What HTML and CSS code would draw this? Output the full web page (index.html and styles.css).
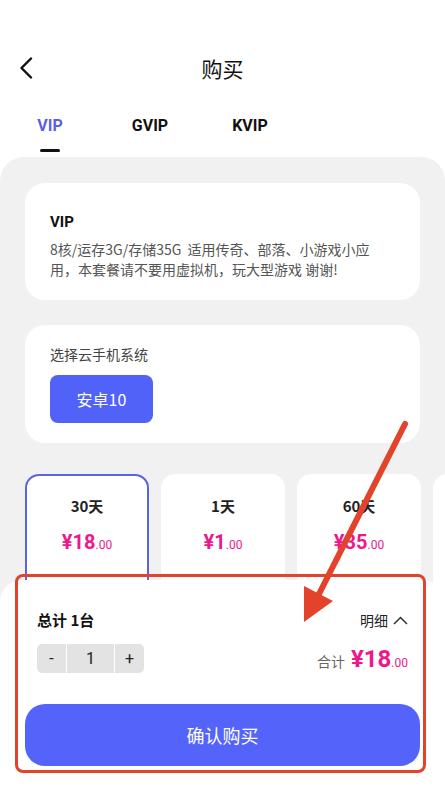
FILE: index.html
```html
<!DOCTYPE html>
<html lang="zh-CN">
<head>
<meta charset="utf-8">
<title>购买</title>
<link rel="stylesheet" href="styles.css">
</head>
<body>
<div class="page">
  <header class="header">
    <span class="back">
      <svg width="14" height="22" viewBox="0 0 14 22"><path d="M12 1.5 L2.5 11 L12 20.5" fill="none" stroke="#111" stroke-width="2.4" stroke-linecap="round" stroke-linejoin="round"/></svg>
    </span>
    <h1 class="title">购买</h1>
    <span></span>
  </header>

  <nav class="tabs">
    <div class="tab active"><span class="tab-text">VIP</span><span class="tab-line"></span></div>
    <div class="tab"><span class="tab-text">GVIP</span></div>
    <div class="tab"><span class="tab-text">KVIP</span></div>
  </nav>

  <main class="panel">
    <section class="card info-card">
      <div class="info-title">VIP</div>
      <p class="info-desc">8核/运存3G/存储35G&nbsp;&nbsp;适用传奇、部落、小游戏小应用，本套餐请不要用虚拟机，玩大型游戏 谢谢!</p>
    </section>

    <section class="card system-card">
      <div class="system-label">选择云手机系统</div>
      <button class="system-btn">安卓10</button>
    </section>

    <div class="plans">
      <div class="plan selected">
        <div class="plan-name">30天</div>
        <div class="plan-price"><span class="yen">¥18</span><span class="cents">.00</span></div>
        <div class="plan-note">新用户首购专享套餐</div>
      </div>
      <div class="plan">
        <div class="plan-name">1天</div>
        <div class="plan-price"><span class="yen">¥1</span><span class="cents">.00</span></div>
        <div class="plan-note">体验版本日用套餐</div>
      </div>
      <div class="plan">
        <div class="plan-name">60天</div>
        <div class="plan-price"><span class="yen">¥35</span><span class="cents">.00</span></div>
        <div class="plan-note">超值优惠套餐</div>
      </div>
      <div class="plan"></div>
    </div>
  </main>

  <footer class="sheet">
    <div class="sheet-row">
      <div class="total-label">总计 1台</div>
      <div class="detail">明细
        <svg width="15" height="9" viewBox="0 0 15 9"><path d="M1 8 L7.5 1.5 L14 8" fill="none" stroke="#333" stroke-width="1.5"/></svg>
      </div>
    </div>
    <div class="sheet-row amount-row">
      <div class="stepper">
        <span class="step minus">-</span>
        <span class="step qty">1</span>
        <span class="step plus">+</span>
      </div>
      <div class="sum"><span class="sum-label">合计</span><span class="sum-yen">¥18</span><span class="sum-cents">.00</span></div>
    </div>
    <button class="confirm">确认购买</button>
  </footer>

  <div class="mark-box"></div>
  <svg class="mark-arrow" width="445" height="791" viewBox="0 0 445 791">
    <line x1="405" y1="424" x2="318" y2="596" stroke="#e3432a" stroke-width="6" stroke-linecap="round"/>
    <polygon points="304,586 333,601 304,622" fill="#e3432a"/>
  </svg>
</div>
</body>
</html>
```

FILE: styles.css
```css
* { box-sizing: border-box; }
html, body { margin: 0; padding: 0; }
body {
  background: #fff;
  font-family: Roboto, "Noto Sans CJK SC", sans-serif;
  color: #111;
  overflow: hidden;
}
.page {
  position: relative;
  width: 445px;
  height: 791px;
  overflow: hidden;
}

.header {
  margin-top: 48px;
  height: 40px;
  display: grid;
  grid-template-columns: 60px 1fr 60px;
  align-items: center;
}
.back {
  display: flex;
  align-items: center;
  padding-left: 19px;
}
.title {
  margin: 0;
  text-align: center;
  font-family: "Noto Sans CJK SC", sans-serif;
  font-size: 21px;
  font-weight: 400;
  line-height: 40px;
  color: #111;
}

.tabs {
  display: grid;
  grid-template-columns: 100px 100px 100px;
  margin-top: 26px;
}
.tab {
  display: flex;
  flex-direction: column;
  align-items: center;
}
.tab-text {
  font-size: 16px;
  font-weight: 700;
  line-height: 24px;
  color: #111;
}
.tab.active .tab-text { color: #5b5fe2; }
.tab-line {
  margin-top: 11px;
  width: 20px;
  height: 3px;
  border-radius: 2px;
  background: #111;
}

.panel {
  margin-top: 5px;
  background: #f1f1f1;
  border-radius: 24px 24px 0 0;
  padding: 26px 25px 0;
  height: 700px;
}
.card {
  background: #fff;
  border-radius: 20px;
}
.info-card {
  padding: 28px 25px 21px;
}
.info-title {
  font-size: 15px;
  font-weight: 700;
  line-height: 22px;
}
.info-desc {
  margin: 6px 0 0;
  width: 340px;
  font-family: "Noto Sans CJK SC", sans-serif;
  font-size: 14px;
  line-height: 20px;
  color: #555;
}
.system-card {
  margin-top: 25px;
  padding: 19px 25px 20px;
}
.system-label {
  font-family: "Noto Sans CJK SC", sans-serif;
  font-size: 14px;
  line-height: 20px;
  color: #444;
}
.system-btn {
  display: block;
  margin-top: 11px;
  width: 103px;
  height: 48px;
  border: 0;
  border-radius: 8px;
  background: #5062f7;
  color: #fff;
  font-family: "Noto Sans CJK SC", sans-serif;
  font-size: 16px;
}

.plans {
  margin-top: 31px;
  margin-right: -25px;
  display: flex;
  gap: 12px;
  overflow: hidden;
}
.plan {
  flex: 0 0 124px;
  height: 140px;
  background: #fff;
  border: 2px solid transparent;
  border-radius: 14px;
  padding-top: 20px;
  text-align: center;
}
.plan.selected { border-color: #5a63e2; }
.plan-name {
  font-family: "Noto Sans CJK SC", sans-serif;
  font-size: 15px;
  font-weight: 700;
  line-height: 20px;
  color: #222;
}
.plan-price {
  margin-top: 12px;
  line-height: 28px;
  color: #ea1a8e;
}
.yen { font-size: 20px; font-weight: 700; }
.cents { font-size: 12px; }
.plan-note {
  margin-top: 19px;
  font-family: "Noto Sans CJK SC", sans-serif;
  font-size: 12px;
  line-height: 16px;
  color: #666;
}

.sheet {
  position: absolute;
  left: 0;
  top: 580px;
  width: 445px;
  height: 211px;
  background: #fff;
  border-radius: 22px 22px 0 0;
  padding: 29px 25px 0;
}
.sheet-row {
  display: flex;
  justify-content: space-between;
  align-items: center;
  padding: 0 12px;
}
.total-label {
  font-family: "Noto Sans CJK SC", sans-serif;
  font-size: 15px;
  font-weight: 700;
  line-height: 22px;
}
.detail {
  display: flex;
  align-items: center;
  gap: 5px;
  font-family: "Noto Sans CJK SC", sans-serif;
  font-size: 14px;
  line-height: 22px;
  color: #222;
}
.amount-row { margin-top: 13px; }
.stepper {
  display: flex;
  height: 29px;
  border-radius: 5px;
  overflow: hidden;
  background: #fff;
  gap: 1px;
}
.step {
  display: flex;
  align-items: center;
  justify-content: center;
  background: #e3e3e3;
  font-size: 16px;
  color: #222;
}
.minus { width: 29px; }
.qty { width: 47px; }
.plus { width: 29px; }
.sum {
  display: flex;
  align-items: baseline;
}
.sum-label {
  font-family: "Noto Sans CJK SC", sans-serif;
  font-size: 14px;
  color: #666;
  margin-right: 6px;
}
.sum-yen {
  font-size: 24px;
  font-weight: 700;
  color: #ea1a8e;
}
.sum-cents {
  font-size: 12px;
  color: #ea1a8e;
}
.confirm {
  display: block;
  margin-top: 31px;
  width: 395px;
  height: 62px;
  border: 0;
  border-radius: 20px;
  background: #5464fb;
  color: #fff;
  font-family: "Noto Sans CJK SC", sans-serif;
  font-size: 18px;
}

.mark-box {
  position: absolute;
  left: 15px;
  top: 574px;
  width: 411px;
  height: 199px;
  border: 3px solid #e3432a;
  border-radius: 8px;
  pointer-events: none;
}
.mark-arrow {
  position: absolute;
  left: 0;
  top: 0;
  pointer-events: none;
}
```
